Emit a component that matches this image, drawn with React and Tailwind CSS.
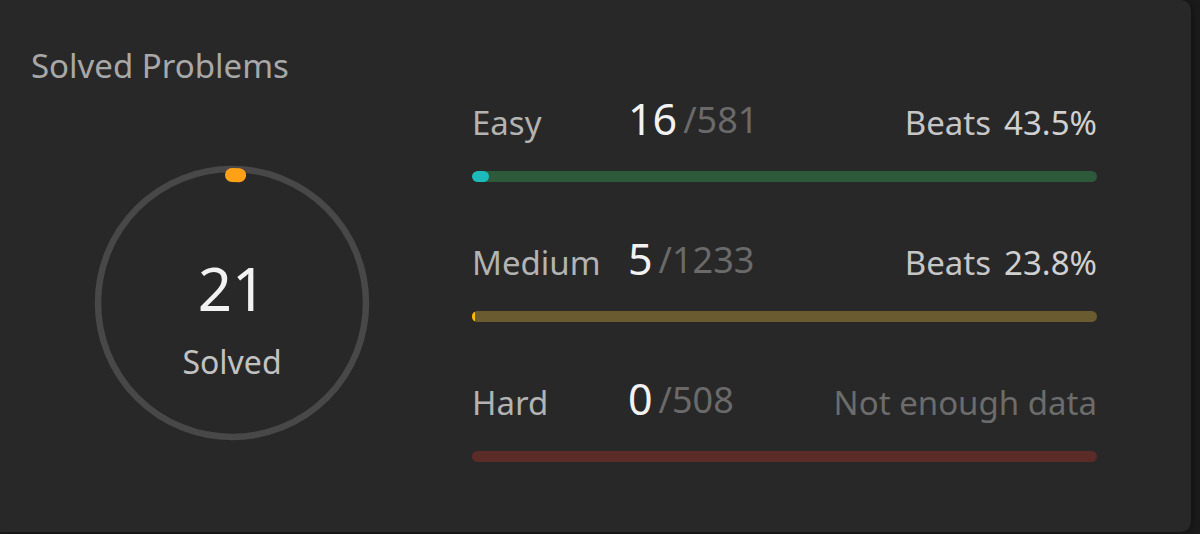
import React from 'react';

const rows = [
  { label: 'Easy', solved: 16, total: 581, beats: '43.5%', track: 'bg-[#2c5a3b]', fill: 'bg-[#1cbaba]' },
  { label: 'Medium', solved: 5, total: 1233, beats: '23.8%', track: 'bg-[#6b5b30]', fill: 'bg-[#ffb800]' },
  { label: 'Hard', solved: 0, total: 508, beats: null, track: 'bg-[#5b2b27]', fill: 'bg-[#f63737]' },
];

const ProgressRing = ({ solved }) => {
  // small arc at the top of the ring, clockwise
  const r = 128;
  const cx = 140;
  const cy = 140;
  const angle = (3.2 * Math.PI) / 180;
  const ex = cx + r * Math.sin(angle);
  const ey = cy - r * Math.cos(angle);

  return (
    <div className="relative ml-[92px] mt-[77px] w-[280px] h-[280px]">
      <svg width="280" height="280" viewBox="0 0 280 280">
        <circle cx={cx} cy={cy} r="134" fill="none" stroke="#484848" strokeWidth="6.5" />
        <path
          d={`M ${cx} ${cy - r} A ${r} ${r} 0 0 1 ${ex} ${ey}`}
          fill="none"
          stroke="#ffa116"
          strokeWidth="14"
          strokeLinecap="round"
        />
      </svg>
      <div className="absolute inset-0 flex flex-col items-center pt-[95px]">
        <span className="text-[60px] leading-[60px] text-[#f2f2f2]">{solved}</span>
        <span className="mt-[28px] text-[32px] leading-[32px] text-[#c2c2c2]">Solved</span>
      </div>
    </div>
  );
};

const DifficultyRow = ({ row }) => {
  const pct = (row.solved / row.total) * 100;
  return (
    <div className="flex flex-col">
      <div className="flex items-baseline">
        <span className="w-[156px] shrink-0 text-[33px] leading-none text-[#b3b3b3]">{row.label}</span>
        <span className="text-[43px] leading-none text-[#f2f2f2]">{row.solved}</span>
        <span className="relative -top-[2px] ml-[6px] text-[36px] leading-none text-[#6a6a6a]">/{row.total}</span>
        {row.beats ? (
          <span className="ml-auto flex items-baseline text-[33px] leading-none text-[#c6c6c6]">
            <span>Beats</span>
            <span className="ml-[13px] text-[#d0d0d0]">{row.beats}</span>
          </span>
        ) : (
          <span className="ml-auto text-[33px] leading-none text-[#6c6c6c]">Not enough data</span>
        )}
      </div>
      <div className={`mt-[31px] h-[11px] w-full rounded-full overflow-hidden ${row.track}`}>
        <div
          className={`h-full rounded-full ${row.fill}`}
          style={{ width: `${Math.max(pct, row.solved > 0 ? 0.4 : 0)}%` }}
        />
      </div>
    </div>
  );
};

export default function App() {
  return (
    <div className="w-[1200px] h-[534px] bg-[#1b1b1b] overflow-hidden font-['Noto_Sans',sans-serif]">
      <div className="w-[1191px] h-[532px] bg-[#282828] rounded-r-[10px] shadow-[2px_0_6px_rgba(0,0,0,0.35)] flex">
        <div className="w-[472px] shrink-0">
          <div className="pl-[31px] pt-[46px] text-[33px] leading-[40px] text-[#a8a8a8]">Solved Problems</div>
          <ProgressRing solved={21} />
        </div>
        <div className="flex-1 pr-[94px] pt-[97px] flex flex-col gap-[55px]">
          {rows.map((row) => (
            <DifficultyRow key={row.label} row={row} />
          ))}
        </div>
      </div>
    </div>
  );
}
